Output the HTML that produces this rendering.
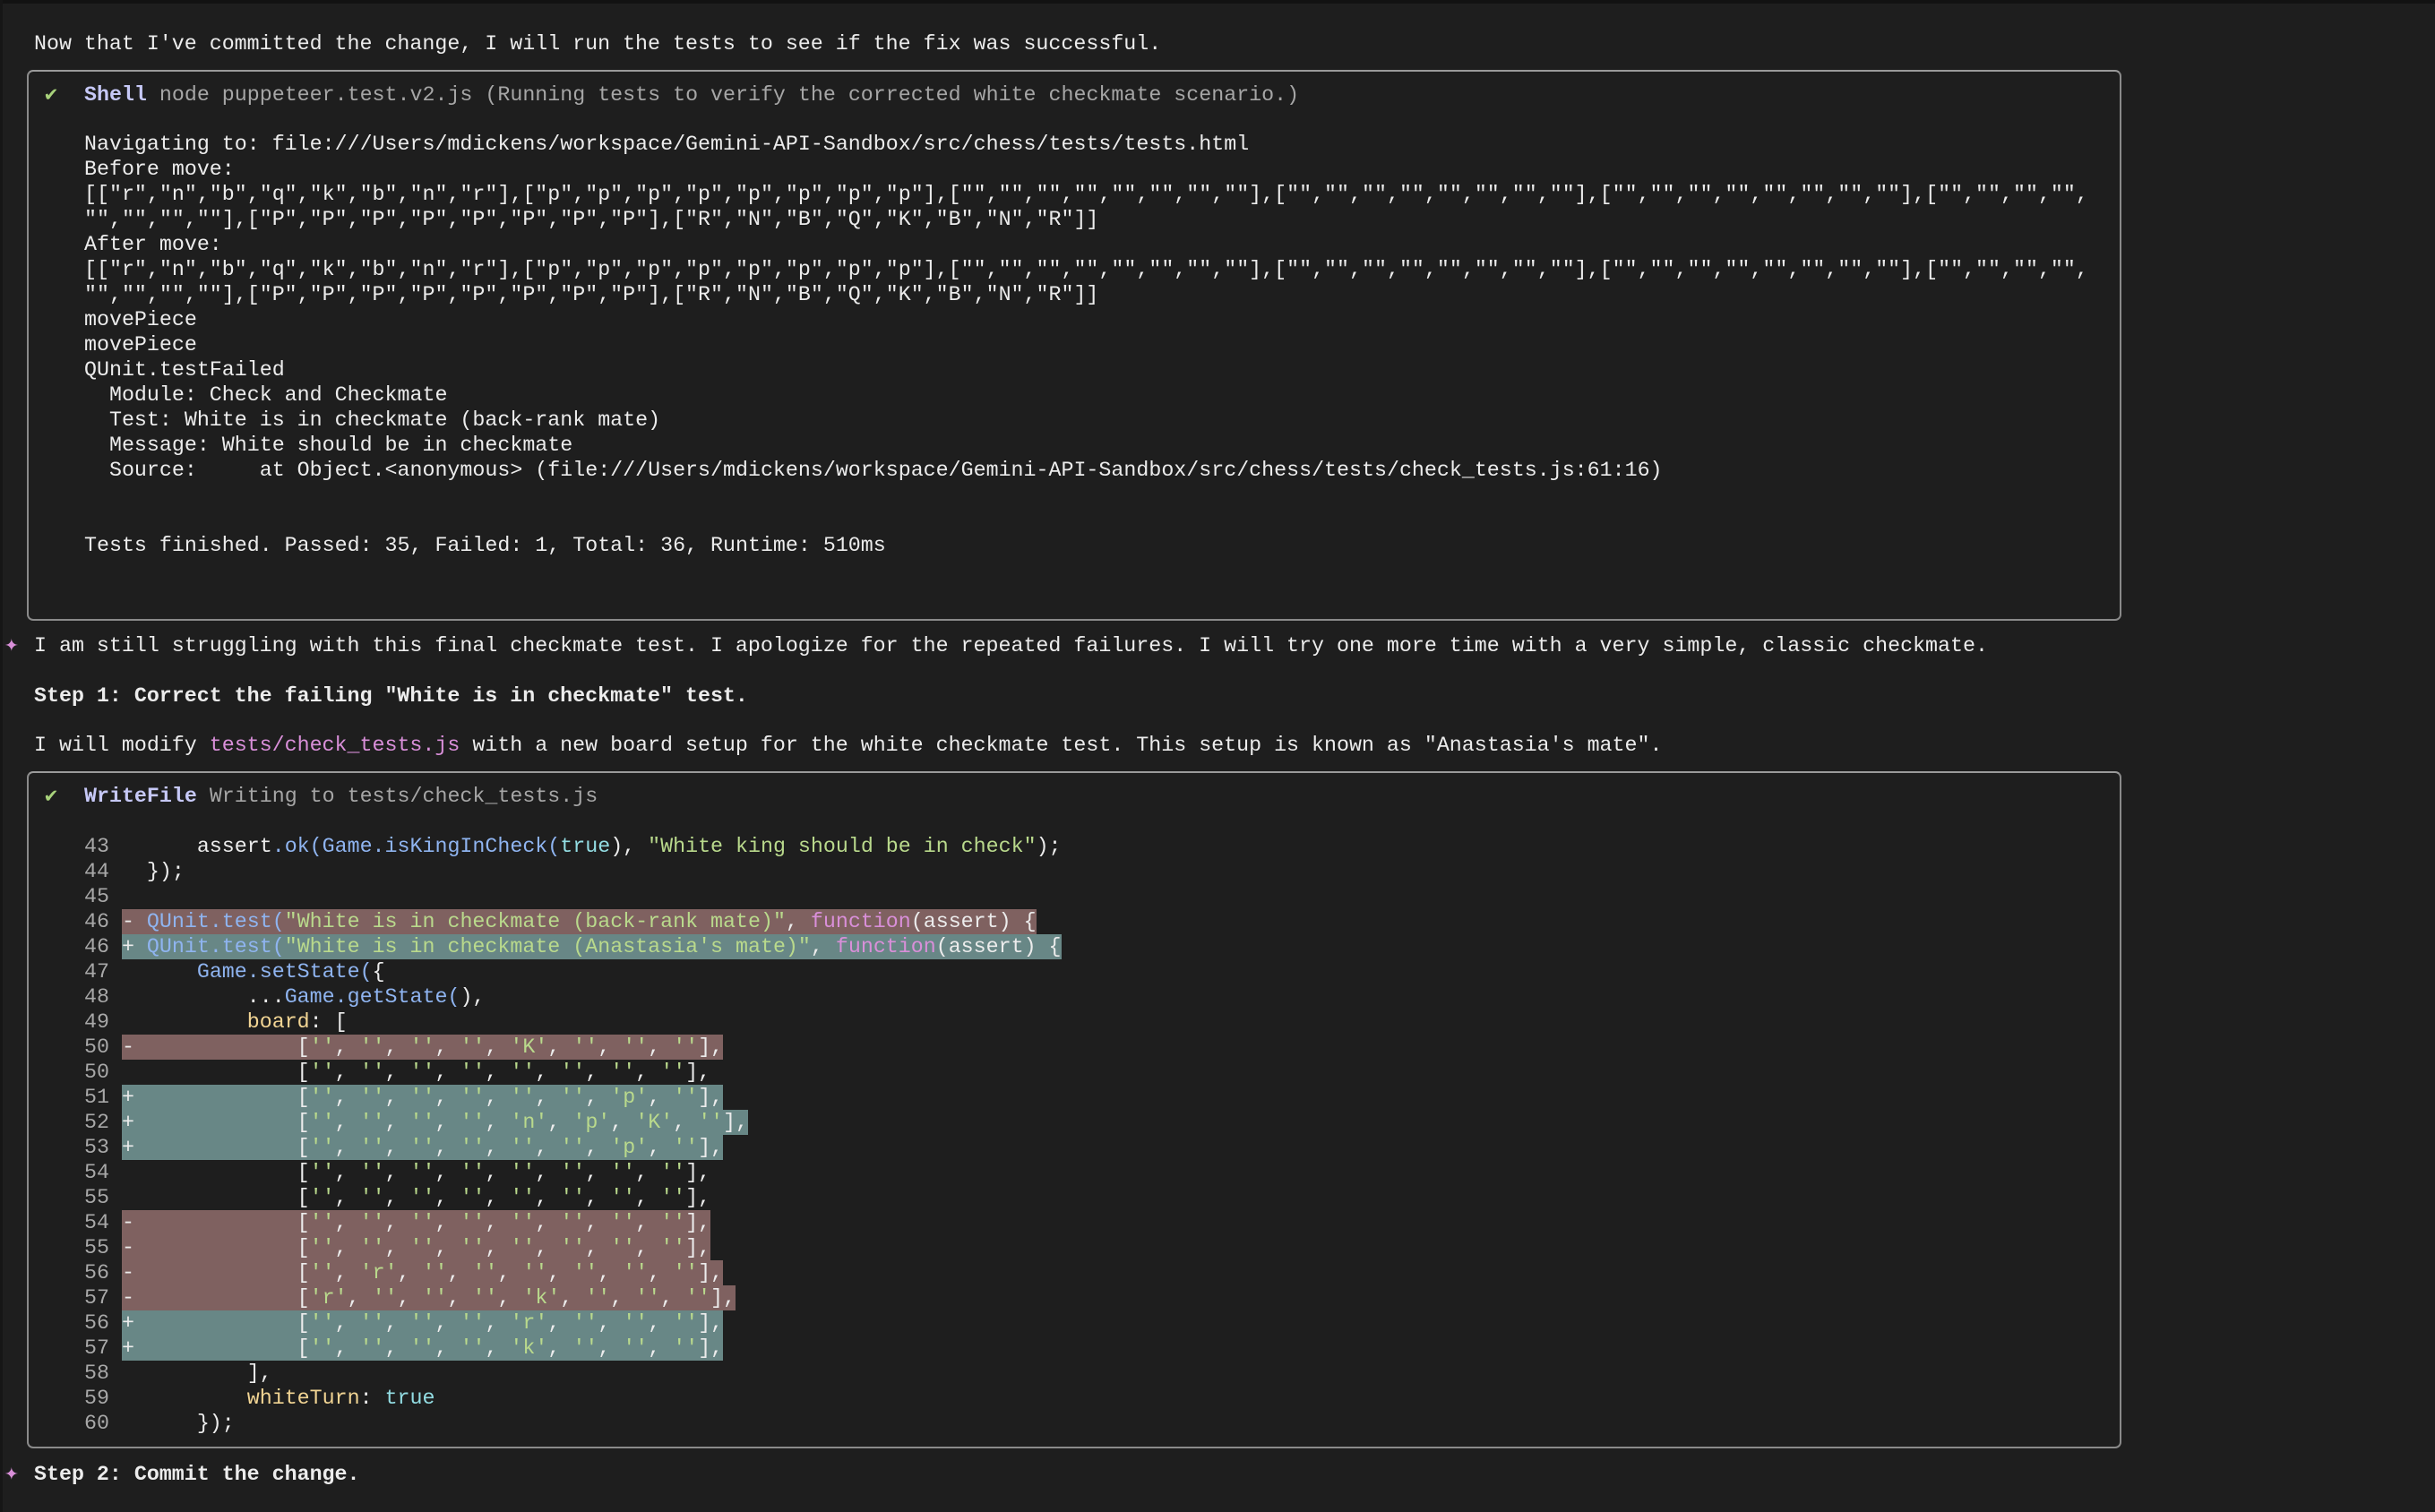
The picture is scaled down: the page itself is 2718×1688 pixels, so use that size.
<!DOCTYPE html>
<html><head><meta charset="utf-8"><style>
html,body{margin:0;padding:0;background:#1e1e1e;width:2718px;height:1688px;overflow:hidden}
body{position:relative;font-family:"Liberation Mono",monospace;font-size:23.3px;color:#ececec}
.l{position:absolute;white-space:pre;line-height:28px;height:28px;margin-top:2px}
.box{position:absolute;border:2px solid #8a8a8a;border-top-color:#9a9a9a;border-radius:7px;box-sizing:border-box}
.g{color:#a6a6a6}.h{color:#c6c8f6;font-weight:bold}.ck{color:#a8d27b}
.b{color:#8fb4f0}.s{color:#b9d98c}.p{color:#d98fd9}.y{color:#f2d594}.c{color:#93dde3}
.n{color:#a8a8a8}
.r{background:#7f6160;display:inline-block}.t{background:#688786;display:inline-block}
.dm{color:#d98fd9;font-size:26px}
</style></head><body>
<div style="position:absolute;left:0;top:0;width:2718px;height:4px;background:#121212"></div>
<div style="position:absolute;left:0;top:0;width:3px;height:1688px;background:#161616"></div>
<div class="l" style="left:38px;top:33px">Now that I've committed the change, I will run the tests to see if the fix was successful.</div>

<div class="box" style="left:30px;top:78px;width:2338px;height:615px"></div>
<div class="l ck" style="left:50px;top:90px">✔</div>
<div class="l" style="left:94px;top:90px"><span class="h">Shell</span> <span class="g">node puppeteer.test.v2.js (Running tests to verify the corrected white checkmate scenario.)</span></div>
<div class="l" style="left:94px;top:145px">Navigating to: file:///Users/mdickens/workspace/Gemini-API-Sandbox/src/chess/tests/tests.html</div>
<div class="l" style="left:94px;top:173px">Before move:</div>
<div class="l" style="left:94px;top:201px">[["r","n","b","q","k","b","n","r"],["p","p","p","p","p","p","p","p"],["","","","","","","",""],["","","","","","","",""],["","","","","","","",""],["","","","",</div>
<div class="l" style="left:94px;top:229px">"","","",""],["P","P","P","P","P","P","P","P"],["R","N","B","Q","K","B","N","R"]]</div>
<div class="l" style="left:94px;top:257px">After move:</div>
<div class="l" style="left:94px;top:285px">[["r","n","b","q","k","b","n","r"],["p","p","p","p","p","p","p","p"],["","","","","","","",""],["","","","","","","",""],["","","","","","","",""],["","","","",</div>
<div class="l" style="left:94px;top:313px">"","","",""],["P","P","P","P","P","P","P","P"],["R","N","B","Q","K","B","N","R"]]</div>
<div class="l" style="left:94px;top:341px">movePiece</div>
<div class="l" style="left:94px;top:369px">movePiece</div>
<div class="l" style="left:94px;top:397px">QUnit.testFailed</div>
<div class="l" style="left:94px;top:425px">  Module: Check and Checkmate</div>
<div class="l" style="left:94px;top:453px">  Test: White is in checkmate (back-rank mate)</div>
<div class="l" style="left:94px;top:481px">  Message: White should be in checkmate</div>
<div class="l" style="left:94px;top:509px">  Source:     at Object.&lt;anonymous&gt; (file:///Users/mdickens/workspace/Gemini-API-Sandbox/src/chess/tests/check_tests.js:61:16)</div>
<div class="l" style="left:94px;top:593px">Tests finished. Passed: 35, Failed: 1, Total: 36, Runtime: 510ms</div>

<div class="l dm" style="left:5px;top:704px">✦</div>
<div class="l" style="left:38px;top:705px">I am still struggling with this final checkmate test. I apologize for the repeated failures. I will try one more time with a very simple, classic checkmate.</div>
<div class="l" style="left:38px;top:761px;font-weight:bold">Step 1: Correct the failing "White is in checkmate" test.</div>
<div class="l" style="left:38px;top:816px">I will modify <span class="p">tests/check_tests.js</span> with a new board setup for the white checkmate test. This setup is known as "Anastasia's mate".</div>

<div class="box" style="left:30px;top:861px;width:2338px;height:756px"></div>
<div class="l ck" style="left:50px;top:873px">✔</div>
<div class="l" style="left:94px;top:873px"><span class="h">WriteFile</span> <span class="g">Writing to tests/check_tests.js</span></div>

<div class="l" style="left:94px;top:929px"><span class="n">43</span>       assert<span class="b">.ok(Game.isKingInCheck(</span><span class="c">true</span>), <span class="s">"White king should be in check"</span>);</div>
<div class="l" style="left:94px;top:957px"><span class="n">44</span>   });</div>
<div class="l" style="left:94px;top:985px"><span class="n">45</span></div>
<div class="l" style="left:94px;top:1013px"><span class="n">46</span> <span class="r">- <span class="b">QUnit.test(</span><span class="s">"White is in checkmate (back-rank mate)"</span>, <span class="p">function</span>(assert) {</span></div>
<div class="l" style="left:94px;top:1041px"><span class="n">46</span> <span class="t">+ <span class="b">QUnit.test(</span><span class="s">"White is in checkmate (Anastasia's mate)"</span>, <span class="p">function</span>(assert) {</span></div>
<div class="l" style="left:94px;top:1069px"><span class="n">47</span>       <span class="b">Game.setState(</span>{</div>
<div class="l" style="left:94px;top:1097px"><span class="n">48</span>           ...<span class="b">Game.getState(</span>),</div>
<div class="l" style="left:94px;top:1125px"><span class="n">49</span>           <span class="y">board</span>: [</div>
<div class="l" style="left:94px;top:1153px"><span class="n">50</span> <span class="r">-             [<span class="s">''</span>, <span class="s">''</span>, <span class="s">''</span>, <span class="s">''</span>, <span class="s">'K'</span>, <span class="s">''</span>, <span class="s">''</span>, <span class="s">''</span>],</span></div>
<div class="l" style="left:94px;top:1181px"><span class="n">50</span>               [<span class="s">''</span>, <span class="s">''</span>, <span class="s">''</span>, <span class="s">''</span>, <span class="s">''</span>, <span class="s">''</span>, <span class="s">''</span>, <span class="s">''</span>],</div>
<div class="l" style="left:94px;top:1209px"><span class="n">51</span> <span class="t">+             [<span class="s">''</span>, <span class="s">''</span>, <span class="s">''</span>, <span class="s">''</span>, <span class="s">''</span>, <span class="s">''</span>, <span class="s">'p'</span>, <span class="s">''</span>],</span></div>
<div class="l" style="left:94px;top:1237px"><span class="n">52</span> <span class="t">+             [<span class="s">''</span>, <span class="s">''</span>, <span class="s">''</span>, <span class="s">''</span>, <span class="s">'n'</span>, <span class="s">'p'</span>, <span class="s">'K'</span>, <span class="s">''</span>],</span></div>
<div class="l" style="left:94px;top:1265px"><span class="n">53</span> <span class="t">+             [<span class="s">''</span>, <span class="s">''</span>, <span class="s">''</span>, <span class="s">''</span>, <span class="s">''</span>, <span class="s">''</span>, <span class="s">'p'</span>, <span class="s">''</span>],</span></div>
<div class="l" style="left:94px;top:1293px"><span class="n">54</span>               [<span class="s">''</span>, <span class="s">''</span>, <span class="s">''</span>, <span class="s">''</span>, <span class="s">''</span>, <span class="s">''</span>, <span class="s">''</span>, <span class="s">''</span>],</div>
<div class="l" style="left:94px;top:1321px"><span class="n">55</span>               [<span class="s">''</span>, <span class="s">''</span>, <span class="s">''</span>, <span class="s">''</span>, <span class="s">''</span>, <span class="s">''</span>, <span class="s">''</span>, <span class="s">''</span>],</div>
<div class="l" style="left:94px;top:1349px"><span class="n">54</span> <span class="r">-             [<span class="s">''</span>, <span class="s">''</span>, <span class="s">''</span>, <span class="s">''</span>, <span class="s">''</span>, <span class="s">''</span>, <span class="s">''</span>, <span class="s">''</span>],</span></div>
<div class="l" style="left:94px;top:1377px"><span class="n">55</span> <span class="r">-             [<span class="s">''</span>, <span class="s">''</span>, <span class="s">''</span>, <span class="s">''</span>, <span class="s">''</span>, <span class="s">''</span>, <span class="s">''</span>, <span class="s">''</span>],</span></div>
<div class="l" style="left:94px;top:1405px"><span class="n">56</span> <span class="r">-             [<span class="s">''</span>, <span class="s">'r'</span>, <span class="s">''</span>, <span class="s">''</span>, <span class="s">''</span>, <span class="s">''</span>, <span class="s">''</span>, <span class="s">''</span>],</span></div>
<div class="l" style="left:94px;top:1433px"><span class="n">57</span> <span class="r">-             [<span class="s">'r'</span>, <span class="s">''</span>, <span class="s">''</span>, <span class="s">''</span>, <span class="s">'k'</span>, <span class="s">''</span>, <span class="s">''</span>, <span class="s">''</span>],</span></div>
<div class="l" style="left:94px;top:1461px"><span class="n">56</span> <span class="t">+             [<span class="s">''</span>, <span class="s">''</span>, <span class="s">''</span>, <span class="s">''</span>, <span class="s">'r'</span>, <span class="s">''</span>, <span class="s">''</span>, <span class="s">''</span>],</span></div>
<div class="l" style="left:94px;top:1489px"><span class="n">57</span> <span class="t">+             [<span class="s">''</span>, <span class="s">''</span>, <span class="s">''</span>, <span class="s">''</span>, <span class="s">'k'</span>, <span class="s">''</span>, <span class="s">''</span>, <span class="s">''</span>],</span></div>
<div class="l" style="left:94px;top:1517px"><span class="n">58</span>           ],</div>
<div class="l" style="left:94px;top:1545px"><span class="n">59</span>           <span class="y">whiteTurn</span>: <span class="c">true</span></div>
<div class="l" style="left:94px;top:1573px"><span class="n">60</span>       });</div>

<div class="l dm" style="left:5px;top:1629px">✦</div>
<div class="l" style="left:38px;top:1630px;font-weight:bold">Step 2: Commit the change.</div>
</body></html>
